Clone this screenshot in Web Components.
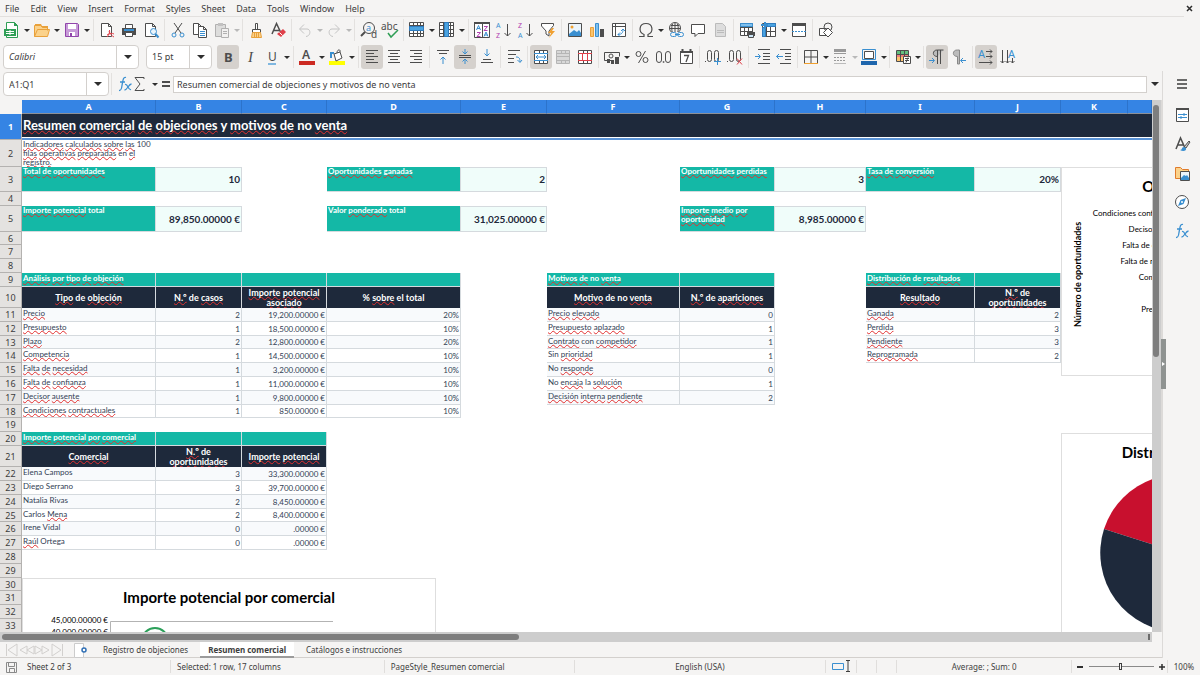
<!DOCTYPE html>
<html lang="es">
<head>
<meta charset="utf-8">
<title>Resumen comercial</title>
<style>
html,body{margin:0;height:100%}
body{background:#f5f4f3;color:#3d3d3d;font:9px/12px "Noto Sans",sans-serif}
</style>
</head>
<body>
<calc-app></calc-app>
<script>
const ICONS = {
  new:'<path style="fill:#fff;stroke:#2f9e55" d="M3.500 1.500h8l3 3v12h-11z"/><path style="fill:#2f9e55" d="M11 1v4h4z"/><path style="fill:#2f9e55" d="M1 8h12v7h-12z"/><path style="stroke:#fff" d="M3 10.500h8M3 12.500h8M7 9v5"/>',
  open:'<path style="fill:#e9a13b" d="M2 3h6l1 2h6v3H2z"/><path style="fill:#fbd28b;stroke:#e9a13b" d="M1.500 15.500v-11h6l2 2h5v3M1.500 15.500l3-7h12l-2 7z"/>',
  save:'<path style="fill:#c79bd8;stroke:#9145ab" d="M2.500 2.500h12l1 1v12h-13z"/><path fill="#fff" d="M5 3h8v5H5zM6 11h6v4H6z"/><path fill="#9145ab" d="M7 12h2v3H7z"/>',
  pdf:'<path class="k" d="M3.500 15.500v-13h7l3 3v10zM10.500 2.500v3h3" style="fill:#fff"/><path d="M9 16c2-2 3-5 2.500-7M9 14c3-2 5-2 7-1M11 10c1 3 3 5 5 6" style="stroke:#e0404a;fill:none"/>',
  print:'<path fill="#4d4d4d" d="M2 7h14v7H2z"/><path class="k" style="fill:#fff" d="M5.500 7V3.500h7V7M5.500 11.500h7v4h-7z"/><path class="b" style="stroke-width:2" d="M4 9h10"/>',
  preview:'<path class="k" style="fill:#fff" d="M3.500 15.500v-13h7l3 3v10zM10.500 2.500v3h3"/><circle class="b" style="fill:#eaf4fb" cx="11.500" cy="10.500" r="3"/><path class="b" style="stroke-width:2" d="M13.500 13l3 3.500"/>',
  cut:'<path class="k" d="M5 2l7 10M13 2L6 12"/><circle class="b" cx="5" cy="14" r="2"/><circle class="b" cx="13" cy="14" r="2"/>',
  copy:'<path class="k" style="fill:#fff" d="M2.500 13.500v-11h5l3 3v8zM7.500 2.500v3h3"/><path class="k" style="fill:#fff" d="M7.500 16.500v-11h5l3 3v8zM12.500 5.500v3h3"/><path class="b" d="M9 10.500h5M9 12.500h5M9 14.500h5"/>',
  paste:'<g opacity=".4"><path class="k" style="fill:#bbb" d="M2.500 3.500h10v12h-10z"/><path fill="#777" d="M5 2h5v3H5z"/><path class="k" style="fill:#eee" d="M8.500 7.500h7v9h-7zM10 10.500h4M10 12.500h4"/></g>',
  brush:'<path class="k" style="fill:#fff" d="M8.500 2.500h2v6h-2zM5.500 8.500h8v3h-8z"/><path style="fill:#fbd28b;stroke:#e9a13b" d="M5.500 11.500h8l1 5h-10z"/><path stroke="#e9a13b" d="M7.500 12v4M9.500 12v4M11.500 12v4"/>',
  clear:'<path class="k" style="stroke-width:1.500" d="M3 13L7.500 2.500 12 12M4.500 9.500h6"/><path fill="#e0404a" d="M14 8l3 3-5 5-4-3z"/><path stroke="#fff" d="M10.500 11.500l3 3"/>',
  undo:'<path class="g" d="M8 3.500L3.500 8 8 12.500M4 8h7c4 0 4 7-1 7.500"/>',
  redo:'<path class="g" d="M10 3.500L14.500 8 10 12.500M14 8H7c-4 0-4 7 1 7.500"/>',
  find:'<circle class="k" cx="10" cy="7" r="5.500"/><path class="k" style="stroke-width:2" d="M6 11l-4 4"/><text x="7" y="10" fill="#3a8fd0" font-size="9">a</text><text x="12" y="17" font-size="10">d</text>',
  spell:'<text x="0" y="9" font-size="10">abc</text><path style="stroke:#2f9e55;stroke-width:1.500;fill:none" d="M7 12l3 4 7-7"/>',
  row:'<path fill="#fff" d="M2 2h14v14H2z"/><path class="k" d="M1.500 1.500h14v14h-14zM5.500 1v14M9.500 1v14M12.500 1v14M1 4.500h15M1 12.500h15"/><path fill="#4aa3e0" stroke="#2f7cc0" d="M1.500 5.500h14v4h-14z"/>',
  col:'<path fill="#fff" d="M2 2h14v14H2z"/><path class="k" d="M1.500 1.500h14v14h-14zM5.500 1v14M12.500 1v14M1 4.500h15M1 8.500h15M1 12.500h15"/><path fill="#4aa3e0" stroke="#2f7cc0" d="M6.500 1.500h4v14h-4z"/>',
  sort:'<path class="k" style="fill:#fff" d="M1.500 1.500h15v15h-15zM9.500 3v13"/><path stroke="#4d4d4d" stroke-width="2" d="M1 2h16"/><path class="b" d="M3.500 9L5.500 4.500 7.500 9M4 7.500h3M11 15.500l2-4.500 2 4.500M11.500 14h3"/><path stroke="#b040b0" fill="none" d="M4 11.500h3.500L4 15.500h3.500M11 5.500h3.500L11 9.500h3.500"/>',
  asc:'<text x="1" y="7" font-size="7" fill="#3a8fd0">A</text><text x="1" y="17" font-size="7" fill="#b040b0">Z</text><path class="k" d="M12.500 3v12M9.500 12l3 3 3-3"/>',
  desc:'<text x="1" y="7" font-size="7" fill="#b040b0">Z</text><text x="1" y="17" font-size="7" fill="#3a8fd0">A</text><path class="k" d="M12.500 3v12M9.500 12l3 3 3-3"/>',
  filter:'<path class="k" style="fill:#fff" d="M2.500 2.500h12v2L10 10v5l-3-2v-3L2.500 5z"/><path fill="#f0a030" d="M13 7l-4 5h3l-2 5 6-7h-3l2-3z"/>',
  image:'<path class="k" style="fill:#eaf4fb" d="M2.500 2.500h13v13h-13z"/><circle fill="#f0a030" cx="6" cy="6" r="1.500"/><path fill="#3a8fd0" d="M3 13l5-4 3 2 2-2 2 3v3H3z"/>',
  chart:'<path style="fill:#fbc46d;stroke:#e9a13b" d="M2.500 6.500h3v9h-3z"/><path style="fill:#7fc0ee;stroke:#3a8fd0" d="M7.500 2.500h3v13h-3z"/><path fill="#4d4d4d" d="M12 8h4v8h-4z"/>',
  pivot:'<path class="k" style="fill:#fff" d="M2.500 2.500h13v13h-13zM5.500 3v13M2.500 5.500h13"/><path class="b" d="M8 13.500c4 0 5-2 5-5M10 11.500l-2 2 2 2M11 10l2-2 2 2"/>',
  omega:'<path class="k" style="stroke-width:1.200" d="M2 15.500h5v-2C1 11 2 2.500 9 2.500S17 11 11 13.500v2h5"/>',
  link:'<circle class="k" cx="8" cy="7" r="5.500"/><path class="k" d="M2.500 7.500h11M4 4.500h8M8 2v11M5.500 3c-1 3-1 6 0 9M10.500 3c1 3 1 6 0 9"/><path style="stroke:#f5f4f3;stroke-width:6" d="M3 14h14"/><rect class="b" x="3.500" y="11.500" width="6" height="4" rx="2"/><rect class="b" x="10.500" y="11.500" width="6" height="4" rx="2"/><path class="b" d="M8 13.500h5"/>',
  comment:'<path class="k" style="fill:#fff" d="M2.500 3.500h13v9H9l-3 3v-3H2.500z"/>',
  hdr:'<path style="fill:#ddd;stroke:#bbb" d="M4.500 2.500h7l3 3v10h-10z"/><path stroke="#bbb" d="M6 9.500h7M6 11.500h7"/>',
  area:'<path fill="#fff" d="M2 2h12v13H2z"/><path class="k" d="M2.500 2.500h12v12h-12zM6.500 2v12M10.500 2v12M2 6.500h12M2 10.500h12"/><path style="stroke:#3a8fd0;fill:#7fc0ee" d="M2.500 2.500h12v3h-12z"/><path fill="#4d4d4d" d="M9 11h8v4h-8z"/><path style="fill:#cde6f7;stroke:#4d4d4d" d="M10.500 13.500h5v3h-5z"/>',
  freeze:'<path class="k" style="fill:#fff" d="M2.500 2.500h13v13h-13zM6.500 2v13M10.500 6v10M6 10.500h10"/><path style="fill:#4aa3e0;stroke:#2f7cc0" d="M2.500 6.500h3v9h-3zM5.500 2.500h10v3h-10z"/><path class="b" style="stroke-width:2" d="M5 1v7M1 4h7"/>',
  split:'<path class="k" style="fill:#fff" d="M2.500 2.500h13v13h-13z"/><path fill="#4d4d4d" d="M2 2h14v3H2z"/><path class="b" stroke-dasharray="2 1" d="M2 10.500h14"/>',
  draw:'<path class="k" style="fill:#fff" d="M2.500 7.500h7v7h-7z"/><circle class="k" cx="11" cy="6" r="4"/><path class="k" style="fill:#fff" d="M11 7l4.500 4.500-4.500 4.500-4.500-4.500z"/>',
  bold:'<text x="5" y="14" font-size="13" font-weight="700">B</text>',
  italic:'<text x="7" y="14" font-size="15" style="font-family:Liberation Serif,serif" font-style="italic">I</text>',
  under:'<text x="5" y="13" font-size="12">U</text><path stroke="#7fb7e0" stroke-width="2" d="M5 16h8"/>',
  fcolor:'<text x="4" y="11" font-size="12" font-weight="600">A</text><path stroke="#cc2a22" stroke-width="4" d="M1 15h16"/>',
  fill:'<path stroke="#ffff00" stroke-width="4" d="M1 15h16"/><path class="k" style="fill:#fff" d="M6 6l6-2 2 6-6 3zM9 5c0-4 4-4 3-1"/><path class="b" style="stroke-width:2" d="M3 10V5h3"/>',
  left:'<path class="k" d="M3 2.500h12M3 5.500h8M3 8.500h12M3 11.500h8M3 14.500h12"/>',
  center:'<path class="k" d="M3 2.500h12M5 5.500h8M3 8.500h12M5 11.500h8M3 14.500h12"/>',
  right:'<path class="k" d="M3 2.500h12M7 5.500h8M3 8.500h12M7 11.500h8M3 14.500h12"/>',
  top:'<path class="k" d="M3 2.500h12M5 5.500h8"/><path class="b" d="M9 16V9M6.500 11.500L9 9l2.500 2.500"/>',
  middle:'<path class="k" d="M3 7.500h12M3 9.500h12"/><path class="b" d="M9 1v5M6.500 3.500L9 6l2.500-2.500M9 16v-5M6.500 13.500L9 11l2.500 2.500"/>',
  bottom:'<path class="k" d="M3 14.500h12M5 11.500h8"/><path class="b" d="M9 1v7M6.500 5.500L9 8l2.500-2.500"/>',
  wrap:'<path class="k" d="M3 2.500h12M3 6.500h8M3 10.500h6M3 14.500h6"/><path class="b" d="M11 9c3 0 4 1 4 5M12.500 12l2.500 2.500 2-2.500"/>',
  merge:'<path class="k" style="fill:#fff" d="M2.500 2.500h13v13h-13zM2.500 5.500h13M2.500 12.500h13M7.500 2.500v3M11.500 2.500v3M7.500 12.500v3M11.500 12.500v3"/><path class="b" d="M2 5.500h14M2 12.500h14M4 9h10M6 7L4 9l2 2M12 7l2 2-2 2"/>',
  mergec:'<path style="stroke:#b5b5b5;fill:#d8d8d8" d="M2.500 2.500h13v13h-13zM2.500 5.500h13M2.500 8.500h13M2.500 12.500h13M7.500 2.500v3M11.500 2.500v3M7.500 12.500v3M11.500 12.500v3"/>',
  unmerge:'<path class="k" style="fill:#fff" d="M2.500 2.500h13v13h-13zM7.500 2.500v3M11.500 2.500v3M7.500 12.500v3M11.500 12.500v3"/><path style="stroke:#e0404a;fill:none" d="M2 5.500h14M2 12.500h14M6.500 5v8M11.500 5v8"/>',
  money:'<path class="k" d="M9 12.500H1.500v-8h15v4"/><circle class="k" cx="8" cy="8" r="2"/><path fill="#4d4d4d" d="M4 11h3v4H4zM8 12h3v4H8zM12 9h4v7h-4z"/>',
  percent:'<circle class="k" cx="5.500" cy="6" r="2.500"/><circle class="k" cx="12.500" cy="12" r="2.500"/><path class="k" d="M12.500 3l-7 12"/>',
  number:'<rect class="k" x="1.500" y="3.500" width="5" height="11" rx="2.500"/><rect class="k" x="10.500" y="3.500" width="5" height="11" rx="2.500"/><path stroke="#4d4d4d" stroke-width="1.500" d="M7.800 14h1.500"/>',
  date:'<path class="k" style="fill:#fff" d="M3.500 3.500h12v12h-12z"/><path stroke="#4d4d4d" stroke-width="2" d="M3 4h13M5.500 1v3M13.500 1v3"/><path class="k" style="stroke-width:1.300" d="M7 7.500h4.500L9 14"/>',
  adddec:'<rect class="k" x="3.500" y="2.500" width="4" height="11" rx="2"/><rect class="k" x="10.500" y="2.500" width="4" height="11" rx="2"/><path class="k" d="M1 13.500h1"/><path class="b" d="M10 13.500h7M13.500 10v7"/>',
  deldec:'<rect class="k" x="3.500" y="2.500" width="4" height="11" rx="2"/><rect class="k" x="10.500" y="2.500" width="4" height="11" rx="2"/><path class="k" d="M1 13.500h1"/><path stroke="#e0404a" d="M11 10.500l5 6M16 10.500l-5 6"/>',
  indent:'<path class="k" d="M5 1.500h12M10 5.500h7M10 8.500h7M10 11.500h7M5 15.500h12"/><path class="b" d="M2 8.500h5M5 6l2.500 2.500L5 11"/>',
  outdent:'<path class="k" d="M5 1.500h11M10 5.500h6M10 8.500h6M10 11.500h6M5 15.500h11"/><path class="b" d="M1.500 8.500H8M4 6L1.500 8.500 4 11"/>',
  borders:'<path class="k" d="M2.500 15V2.500h13V15M9 2v13M2 9h14"/><path stroke="#f0a030" d="M2 15.500h14"/>',
  lines:'<path stroke="#999" d="M3 1.500h12M3 5.500h12"/><path stroke="#999" stroke-width="2" d="M3 3h12"/><path stroke="#999" stroke-dasharray="2 1" d="M3 9.500h12M3 12.500h12"/><path stroke="#bbb" d="M3 15.500h12"/>',
  bcolor:'<path style="stroke:#4d4d4d;fill:#fff;stroke-width:1" d="M4.500 3.500h9v7h-9z"/><path class="b" d="M2.500 1.500h13v10h-13z"/><path stroke="#1f66ad" stroke-width="4" d="M1 15h16"/>',
  cond:'<path class="k" style="fill:#fff" d="M2.500 2.500h12v11h-12z"/><path fill="#62bf7f" d="M3 3h11v3H3z"/><path fill="#ef7f7f" d="M3 6h11v3H3z"/><path fill="#fbc46d" d="M3 9h7v4H3z"/><path class="k" d="M6.500 3v10M10.500 3v6M3 6.500h11"/><path class="k" style="fill:#fff" d="M9.500 8.500h7v7h-7zM11 10.500h4M11 12.500h4M14 9.500l-2 5"/>',
  ltr:'<path fill="#bbb" stroke="#4d4d4d" d="M9.500 8.500c-6 0-5-7 0-6.500h6M9.500 2v14M12.500 2v14"/><path class="b" d="M1 12.500h5M4 10l2.500 2.500L4 15"/>',
  rtl:'<path fill="#bbb" stroke="#888" d="M7.500 8.500c-6 0-5-7 0-6.500h2v14h-2z"/><path class="b" d="M11 12.500h5M13 10l-2.500 2.500L13 15"/>',
  hdir:'<text x="1" y="10" font-size="11" fill="#3a8fd0">A</text><path class="k" d="M9 3.500h6M13 1.500l2 2-2 2M9 8.500h6M13 6.500l2 2-2 2M2 14.500h13M13 12.500l2 2-2 2"/>',
  vdir:'<text x="9" y="10" font-size="11" fill="#3a8fd0">A</text><path class="k" d="M3.500 2v13M1.500 13l2 2 2-2M8.500 2v13M6.500 13l2 2 2-2M13.500 10v5M11.500 13l2 2 2-2"/>',
  fx:'<path class="b" style="stroke-width:1.300" d="M10 2.500c-3-1-3 3-4 8-.500 4-1 5-3 5M4 7h5M9 9.500c3-1 3 6 6 5M15.500 9c-3 0-4 6-7 6"/>',
  sum:'<path class="k" d="M13 4V2.500H4l5 6.500-5 6.500h9V14"/>',
  eq:'<path stroke="#4d4d4d" stroke-width="2" d="M5 7h8M5 11h8"/>',
  ham:'<path stroke="#3d3d3d" stroke-width="1.500" d="M4 5h10M4 9h10M4 13h10"/>',
  props:'<path class="k" style="fill:#fff" d="M3.500 2.500h12v13h-12z"/><path stroke="#4d4d4d" stroke-width="2" d="M3 3h13"/><path class="b" d="M5 8.500h9M5 11.500h9M11 7v3M8 10v3"/>',
  styles:'<path class="k" style="stroke-width:1.500" d="M3 14L7.500 3 12 13M4.500 10h6"/><path class="k" style="fill:#ccc" d="M16 6l-5 6 2 1 4-6z"/><path fill="#3a8fd0" d="M11 12c-3 0-1 3-4 3 3 2 7 1 6-2z"/>',
  gallery:'<path style="fill:#fbd28b;stroke:#e07b2c" d="M2.500 14.500v-11h5l2 2h6v9z"/><path class="k" style="fill:#eaf4fb" d="M7.500 7.500h9v9h-9z"/><path fill="#3a8fd0" d="M8 14l3-3 2 1 1-1 2 3v2H8z"/>',
  nav:'<circle class="k" style="fill:#fff" cx="9" cy="9" r="6.500"/><path fill="#3a8fd0" d="M13 5l-2.500 6L5 13l2.500-6z"/><circle fill="#fff" cx="9" cy="9" r="1"/>',
  disk:'<path style="fill:none;stroke:#8a8a8a" d="M3.500 3.500h10v10h-10zM5.500 3.500v4h6v-4M6.500 13.500v-4h5v4"/>',
  addsheet:'<path style="fill:#fff;stroke:#ccc" d="M.5 1.500h9v14h-9z"/><circle cx="10" cy="8" r="2" style="fill:#fff;stroke:#2f6fb5;stroke-width:1.500"/>',
  first:'<path class="p" d="M3.500 3v12M14 3L5 9l9 6z"/>', prev:'<path class="p" d="M9 5L2 9l7 4zM16 5L9 9l7 4z"/>',
  next:'<path class="p" d="M2 5l7 4-7 4zM9 5l7 4-7 4z"/>', last:'<path class="p" d="M14.500 3v12M4 3l9 6-9 6z"/>'
};

function define(tag, css, html) {
  customElements.define(tag, class extends HTMLElement {
    constructor() { super(); this.attachShadow({mode:'open'}); }
    connectedCallback() {
      if (this.shadowRoot.childNodes.length) return;
      const t = document.createElement('template');
      t.innerHTML = '<style>*{box-sizing:border-box}button,input,select{font:inherit;color:inherit;margin:0;border:0;padding:0;background:none}' + css + '</style>' +
        (typeof html === 'function' ? html(this) : html);
      this.shadowRoot.append(t.content.cloneNode(true));
    }
  });
}

define('calc-icon', `:host{display:block;width:18px;height:18px}svg{display:block;overflow:visible}
  text{fill:#4d4d4d;font-family:"Noto Sans",sans-serif}text[fill="#3a8fd0"]{fill:#3a8fd0}text[fill="#b040b0"]{fill:#b040b0}
  .k{stroke:#4d4d4d;fill:none}.b{stroke:#3a8fd0;fill:none}.g{stroke:#c4c4c4;fill:none}.p{stroke:#d2d0ce;fill:none}`,
  el => `<svg width="18" height="18" viewBox="0 0 18 18" fill="none" aria-hidden="true">${ICONS[el.getAttribute('name')]}</svg>`);

define('tool-button', `:host{display:flex;align-items:center;flex:none}
  .main{width:22px;height:24px;border-radius:3px;display:flex;align-items:center;justify-content:center}
  :host([pressed]) .main{background:#d5d1cd}
  .drop{width:8px;height:24px;display:flex;align-items:center;justify-content:center}
  :host([narrow]) .drop{width:7px}
  .drop::after{content:"";border:3px solid transparent;border-top-color:#2e2e2e;border-bottom:0}
  :host([faint]) .drop::after{border-top-color:#b9b9b9}`,
  el => { const l = el.getAttribute('label');
    return `<button class="main" aria-label="${l}"><calc-icon name="${el.getAttribute('icon')}"></calc-icon></button>` +
      (el.hasAttribute('drop') ? `<button class="drop" aria-label="${l}: options"></button>` : ''); });

define('tool-sep', `:host{display:block;flex:none;width:5px;height:22px;padding-left:2px}i{display:block;width:1px;height:100%;background:#e3e1df}`, '<i></i>');

define('tool-bar', `:host{display:flex;align-items:center;flex:none;padding-left:1px;height:26px}:host([format]){height:28px}`, '<slot></slot>');

define('menu-bar', `:host{display:flex;height:17px;flex:none;justify-content:space-between;align-items:center;padding:0 6px 0 5px;
  background:linear-gradient(#e2e0de,#e2e0de) 0 100%/calc(100% - 16px) 1px no-repeat}
  nav{display:flex;gap:11px;height:17px;align-items:center}
  .x{width:10px;height:12px}`,
  '<nav>' + ['File','Edit','View','Insert','Format','Styles','Sheet','Data','Tools','Window','Help'].map(t => `<button>${t}</button>`).join('') +
  '</nav><button class="x" aria-label="Close"><svg width="7" height="7" viewBox="0 0 7 7"><path d="M1 1l5 5M6 1L1 6" stroke="#2e2e2e" stroke-width="1.500"/></svg></button>');

define('combo-box', `:host{display:block;flex:none;position:relative;height:24px;border:1px solid #d3d0cd;border-radius:4px;background:#fff}
  select,input{appearance:none;width:100%;height:100%;padding-left:5px;border-radius:4px;outline:0}
  :host([italic]) select{font-style:italic}
  .d{position:absolute;right:0;top:0;width:22px;height:100%;border-left:1px solid #d3d0cd;display:flex;align-items:center;justify-content:center;pointer-events:none}
  .d::after{content:"";border:4px solid transparent;border-top-color:#2e2e2e;border-bottom:0}`,
  el => { const v = el.getAttribute('value'), l = el.getAttribute('label');
    return (el.hasAttribute('editable') ? `<input aria-label="${l}" value="${v}">` : `<select aria-label="${l}"><option>${v}</option></select>`) + '<span class="d"></span>'; });

define('formula-bar', `:host{display:flex;align-items:center;flex:none;height:26px;padding-left:3px;margin-bottom:3px}
  combo-box{width:106px}
  .in{flex:1;min-width:0;height:17px;border:1px solid #d3d0cd;background:#fff;padding:0 3px;outline:0}
  tool-button.n{margin-right:-7px}tool-button.e{margin:0 -4px}
  .more{width:15px;height:20px;display:flex;align-items:center;justify-content:center}
  .more::after{content:"";border:4px solid transparent;border-top-color:#2e2e2e;border-bottom:0}`,
  `<combo-box editable label="Name box" value="A1:Q1"></combo-box><tool-sep></tool-sep>
  <tool-button class="n" icon="fx" label="Function wizard"></tool-button><tool-button icon="sum" label="Select function" drop></tool-button>
  <tool-button class="e" icon="eq" label="Formula"></tool-button>
  <input class="in" aria-label="Input line" value="Resumen comercial de objeciones y motivos de no venta"><button class="more" aria-label="Expand formula bar"></button>`);

/* Words wrapped in asterisks carry the spelling mark. */
const sp = s => s.replace(/\*([^*]+)\*/g, '<u>$1</u>');
const COLS = ['A','B','C','D','E','F','G','H','I','J','K',''];
const WIDTHS = [134,86,85,134,86,133,95,91,109,86,67];
const HEIGHTS = [26,27,25,14,26,13,14,14,14,21,14,14,13,14,14,14,14,13,14,14,21,14,14,14,13,14,14,14,14,13,14,14,14];
const cells = {};
const put = (ref, cls, text) => { cells[ref] = [cls, text]; };
[['A3','*Total* *de* *oportunidades*'],['D3','*Oportunidades* *ganadas*'],['G3','*Oportunidades* *perdidas*'],['I3','*Tasa* *de* *conversión*'],
 ['A5','*Importe* *potencial* total'],['D5','Valor *ponderado* total'],['G5','*Importe* *medio* *por* *oportunidad*']].forEach(([r,t]) => put(r,'lab',t));
[['B3','10'],['E3','2'],['H3','3'],['J3','20%'],['B5','89,850.00000 €'],['E5','31,025.00000 €'],['H5','8,985.00000 €']].forEach(([r,t]) => put(r,'val',t));
put('A2','note','*Indicadores* *calculados* *sobre* *las* 100 *filas* *operativas* *preparadas* en *el* *registro.*');
function block(row, cols, title, heads, data) {
  cols.forEach((c, i) => {
    put(c + row, 'band', i ? '' : title);
    put(c + (row + 1), 'head', heads[i]);
    data.forEach((d, j) => put(c + (row + 2 + j), (i ? 'num' : 'txt') + (j % 2 ? '' : ' alt'), String(d[i])));
  });
}
block(9, ['A','B','C','D'], '*Análisis* *por* *tipo* *de* *objeción*', ['*Tipo* de *objeción*','*N.º* de *casos*','*Importe* *potencial* *asociado*','% *sobre* el total'],
 [['*Precio*',2,'19,200.00000 €','20%'],['*Presupuesto*',1,'18,500.00000 €','10%'],['*Plazo*',2,'12,800.00000 €','20%'],['*Competencia*',1,'14,500.00000 €','10%'],
  ['*Falta* *de* *necesidad*',1,'3,200.00000 €','10%'],['*Falta* *de* *confianza*',1,'11,000.00000 €','10%'],['*Decisor* *ausente*',1,'9,800.00000 €','10%'],['*Condiciones* *contractuales*',1,'850.00000 €','10%']]);
block(9, ['F','G'], '*Motivos* *de* no *venta*', ['*Motivo* de no *venta*','*N.º* de *apariciones*'],
 [['*Precio* *elevado*',0],['*Presupuesto* *aplazado*',1],['*Contrato* con *competidor*',1],['Sin *prioridad*',1],['No *responde*',0],['No *encaja* la *solución*',1],['*Decisión* *interna* *pendiente*',2]]);
block(9, ['I','J'], '*Distribución* de *resultados*', ['*Resultado*','*N.º* de *oportunidades*'], [['*Ganada*',2],['*Perdida*',3],['*Pendiente*',3],['*Reprogramada*',2]]);
block(20, ['A','B','C'], '*Importe* *potencial* *por* *comercial*', ['*Comercial*','*N.º* de *oportunidades*','*Importe* *potencial*'],
 [['Elena Campos',3,'33,300.00000 €'],['Diego Serrano',3,'39,700.00000 €'],['Natalia Rivas',2,'8,450.00000 €'],['Carlos *Mena*',2,'8,400.00000 €'],['Irene Vidal',0,'.00000 €'],['*Raúl* Ortega',0,'.00000 €']]);

define('sheet-grid', `:host{display:block}
  table{table-layout:fixed;border-collapse:separate;border-spacing:0;width:100%;min-width:1152px}
  th,td{padding:0;overflow:hidden}
  thead th{height:14px;background:#3584e4;color:#fff;font-weight:700;line-height:12px;border-right:1px solid #2c73cb;border-bottom:1px solid #8d9097}
  thead th:first-child{background:#f5f4f3;border-color:#f5f4f3}
  tbody th{background:#e4e2e0;font-weight:400;line-height:11px;border-right:1px solid #b4b2b0;border-bottom:1px solid #b4b2b0;vertical-align:middle}
  tbody tr:first-child th{background:#3584e4;color:#fff;font-weight:700}
  td{font:8px/11px Lato,sans-serif;color:#334155;vertical-align:top;padding:0 1px}
  u{text-decoration:underline wavy #e23030 1px;text-underline-offset:0;text-decoration-skip-ink:none}
  .title{background:#1e293b;color:#fff;font-weight:700;font-size:13px;line-height:23px;border-bottom:2px solid #5b93d6;box-shadow:inset 0 -1px #fff}
  .note{line-height:9px}
  .lab{background:#14b8a6;color:#fff;font-weight:700;line-height:9px;border:1px solid #d5dade;border-width:0 1px 1px 0}
  .val{background:#f0fdfa;color:#1e293b;font-size:10px;font-weight:700;text-align:right;vertical-align:middle;border:1px solid #d5dade;border-width:1px 1px 1px 0}
  .band{background:#14b8a6;color:#fff;font-weight:700;border:1px solid #d5dade;border-width:0 1px 1px 0}
  .head{background:#1e293b;color:#fff;font-weight:700;font-size:9px;line-height:10px;text-align:center;vertical-align:middle;border-right:1px solid #d5dade}
  .txt,.num{border:1px solid #d5dade;border-width:0 1px 1px 0}
  .num{text-align:right;vertical-align:bottom}
  .alt{background:#f8fafc}`,
  () => '<table><colgroup><col style="width:22px">' + WIDTHS.map(w => `<col style="width:${w}px">`).join('') + '<col></colgroup><thead><tr><th></th>' +
    COLS.map(c => `<th scope="col">${c}</th>`).join('') + '</tr></thead><tbody>' +
    HEIGHTS.map((h, i) => `<tr style="height:${h}px"><th scope="row">${i + 1}</th>` + (i === 0
      ? '<td class="title" colspan="12">' + sp('*Resumen* *comercial* *de* *objeciones* y *motivos* *de* no *venta*') + '</td>'
      : COLS.map(c => { const v = c && cells[c + (i + 1)]; return v ? `<td class="${v[0]}">${sp(v[1])}</td>` : '<td></td>'; }).join('')) + '</tr>').join('') + '</tbody></table>');

define('chart-frame', `:host{display:block;background:#fff;border:1px solid #dedede;color:#000;font:8px/12px Lato,sans-serif;overflow:hidden}
  h2{margin:0;font-size:15px;line-height:20px;font-weight:700;text-align:center;padding-top:8px;white-space:nowrap}`,
  el => `<h2>${el.getAttribute('heading')}</h2><slot></slot>`);

define('sheet-view', `:host{display:flex;flex-direction:column;flex:1;min-height:0}
  .row{display:flex;flex:1;min-height:0}
  .pane{flex:1;min-width:0;position:relative;overflow:hidden;background:#fff}
  chart-frame{position:absolute}
  .c1{left:1061px;top:67px;width:294px;height:209px}
  .c2{left:1061px;top:333px;width:296px;height:240px}
  .c3{left:22px;top:478px;width:414px;height:200px}
  .c1 .body{display:flex;padding-top:9px}
  .axis{writing-mode:vertical-rl;transform:rotate(180deg);font-weight:700;font-size:9px;line-height:12px;text-align:center;width:12px;margin-left:10px;height:138px}
  ul{list-style:none;margin:0;padding:0;width:101px;text-align:right}li{height:16px;line-height:16px;white-space:nowrap}
  .c3 .body{display:flex;padding-top:1px}.c3 ul{width:85px;margin-top:6px}.c3 li{height:12px;line-height:12px}
  svg{display:block}
  .v{flex:none;width:10px;background:#cdcdcd;border-right:1px solid #dcdad8;padding:5px 2px 0 1px}
  .v i{display:block;height:252px;border-radius:3px;background:#7e7e7e}
  .h{flex:none;display:flex;justify-content:space-between;height:10px;background:#cdcdcd;margin-right:10px;padding:2px}
  .h i{width:45%;border-radius:3px;background:#7e7e7e}
  .h b{width:2px;background:#6b6b6b}`,
  `<div class="row"><div class="pane"><sheet-grid></sheet-grid>
   <chart-frame class="c1" heading="Objeciones por tipo"><div class="body"><div class="axis">Número de oportunidades</div>
    <ul><li>Condiciones contractuales</li><li>Decisor ausente</li><li>Falta de confianza</li><li>Falta de necesidad</li><li>Competencia</li><li>Plazo</li><li>Presupuesto</li><li>Precio</li></ul></div></chart-frame>
   <chart-frame class="c2" heading="Distribución de resultados"><svg width="220" height="180" viewBox="0 0 220 180">
    <path fill="#c8102e" d="M117 91L42 67A79 79 0 0 1 163 27z"/><path fill="#1e293b" d="M117 91L42 67A79 79 0 0 0 117 170z"/>
    <path fill="#14b8a6" d="M117 91V170A79 79 0 0 0 192 67z"/><path fill="#f59e0b" d="M117 91L192 67A79 79 0 0 0 163 27z"/></svg></chart-frame>
   <chart-frame class="c3" heading="Importe potencial por comercial"><div class="body"><ul><li>45,000.00000 €</li><li>40,000.00000 €</li></ul>
    <svg width="228" height="60" viewBox="0 0 228 60"><path d="M2.500 60V13.500H225" fill="none" stroke="#b3b3b3"/><circle cx="47" cy="33" r="13" fill="none" stroke="#2ca05a" stroke-width="2"/></svg></div></chart-frame>
  </div><div class="v"><i></i></div></div><div class="h"><i></i><b></b></div>`);

define('sheet-tabs', `:host{display:flex;flex:none;height:16px;align-items:center;border-bottom:1px solid #d3d0cd;padding-left:4px;font-size:8px}
  .n{width:15px;height:15px}.n calc-icon{margin:-1px}
  .add{width:20px;margin:0 1px 0 10px;height:15px}
  [role=tablist]{display:flex;gap:4px;height:16px}
  [role=tab]{padding:0 8px;height:16px;line-height:15px}
  [aria-selected]{background:#fff;font-weight:700;border-bottom:2px solid #9b9b9b}`,
  ['first','prev','next','last'].map(n => `<button class="n" aria-label="${n} sheet"><calc-icon name="${n}"></calc-icon></button>`).join('') +
  `<button class="add" aria-label="Add sheet"><calc-icon name="addsheet"></calc-icon></button>
  <div role="tablist"><button role="tab">Registro de objeciones</button><button role="tab" aria-selected="true">Resumen comercial</button><button role="tab">Catálogos e instrucciones</button></div>`);

define('side-bar', `:host{display:flex;flex-direction:column;align-items:center;flex:none;width:38px;border-left:1px solid #dcdad8;position:relative}
  button{width:26px;height:29px;display:flex;align-items:center;justify-content:center}
  .m{height:26px;margin-bottom:3px}
  .grip{position:absolute;left:-2px;top:268px;width:5px;height:50px;background:#8f9391}
  .grip::after{content:"";border:2px solid transparent;border-left:3px solid #fff;border-right:0}`,
  '<button class="m" aria-label="Sidebar settings"><calc-icon name="ham"></calc-icon></button>' +
  [['props','Properties'],['styles','Styles'],['gallery','Gallery'],['nav','Navigator'],['fx','Functions']].map(([n,l]) => `<button aria-label="${l}"><calc-icon name="${n}"></calc-icon></button>`).join('') +
  '<button class="grip" aria-label="Hide sidebar"></button>');

define('status-bar', `:host{display:grid;flex:none;height:17px;font-size:8px;align-items:center;grid-template-columns:22px 148px 214fr 190fr 252fr 31px 20px 20px 175fr 96px 33px}
  :host>*{height:13px}
  span{line-height:14px;height:13px;padding-left:6px;border-left:1px solid #e0dedc;white-space:nowrap}
  .s{padding-left:5px;border:0}.c{text-align:center;padding:0}
  calc-icon{margin:-3px 0 0 3px;height:13px}
  .z{display:flex;align-items:center;gap:4px;padding-left:4px}
  .z button{width:9px;height:13px;display:flex;align-items:center}
  input{appearance:none;width:65px;height:13px;background:linear-gradient(#8a8a8a,#8a8a8a) center/100% 1px no-repeat}
  input::-webkit-slider-thumb{appearance:none;width:3px;height:7px;background:#f5f4f3;border:1px solid #3d3d3d}`,
  `<calc-icon name="disk"></calc-icon><span class="s">Sheet 2 of 3</span><span>Selected: 1 row, 17 columns</span><span>PageStyle_Resumen comercial</span><span class="c">English (USA)</span>
  <span><svg width="20" height="12" viewBox="0 0 20 12" fill="none"><path d="M.5 3.500h11v6H.5z" stroke="#3a8fd0"/><path d="M14 .5h4M16 .5v11M14 11.500h4" stroke="#3d3d3d"/></svg></span><span></span><span></span>
  <span class="c">Average: ; Sum: 0</span>
  <span class="z"><button aria-label="Zoom out"><svg width="8" height="8"><path d="M1 4h6" stroke="#2e2e2e" stroke-width="2"/></svg></button><input type="range" aria-label="Zoom" value="48"><button aria-label="Zoom in"><svg width="8" height="8"><path d="M1 4h6M4 1v6" stroke="#2e2e2e" stroke-width="1.500"/></svg></button></span>
  <span class="c">100%</span>`);

/* "|" separates groups; suffixes: ":" drop-down, "-" narrow drop-down, "!" pressed, "~" faint */
const tools = s => s.trim().split(/\s+/).map(t => {
  if (t === '|') return '<tool-sep></tool-sep>';
  const [, n, f] = t.match(/^([a-z]+)(.*)$/), flag = (c, a) => f.includes(c) ? ' ' + a : '';
  return `<tool-button icon="${n}" label="${n}"${flag(':','drop')}${flag('-','narrow')}${flag('!','pressed')}${flag('~','faint')}></tool-button>`;
}).join('');

define('calc-app', `:host{display:flex;flex-direction:column;height:100vh;min-height:400px;overflow:hidden}
  .mid{display:flex;flex:1;min-height:0}.main{display:flex;flex-direction:column;flex:1;min-width:0}
  .font{width:136px;margin:0 7px 0 2px}.size{width:66px;margin-right:5px}`,
  `<menu-bar></menu-bar>
  <tool-bar>${tools('new: open: save: | pdf print preview | cut copy paste:-~ | brush clear | undo:-~ redo:-~ | find spell | row: col: | sort asc desc filter | image chart pivot | omega: link comment hdr | area freeze: split | draw')}</tool-bar>
  <tool-bar format><combo-box class="font" italic label="Font name" value="Calibri"></combo-box><combo-box class="size" label="Font size" value="15 pt"></combo-box>${tools('bold! italic under: | fcolor: fill: | left! center right | top middle! bottom | wrap | merge! mergec unmerge | money: percent number date | adddec deldec | indent outdent | borders:- lines:-~ bcolor:- | cond:- | ltr! rtl | hdir! vdir')}</tool-bar>
  <div class="mid"><div class="main"><formula-bar></formula-bar><sheet-view></sheet-view><sheet-tabs></sheet-tabs></div><side-bar></side-bar></div>
  <status-bar></status-bar>`);
</script>
</body>
</html>
